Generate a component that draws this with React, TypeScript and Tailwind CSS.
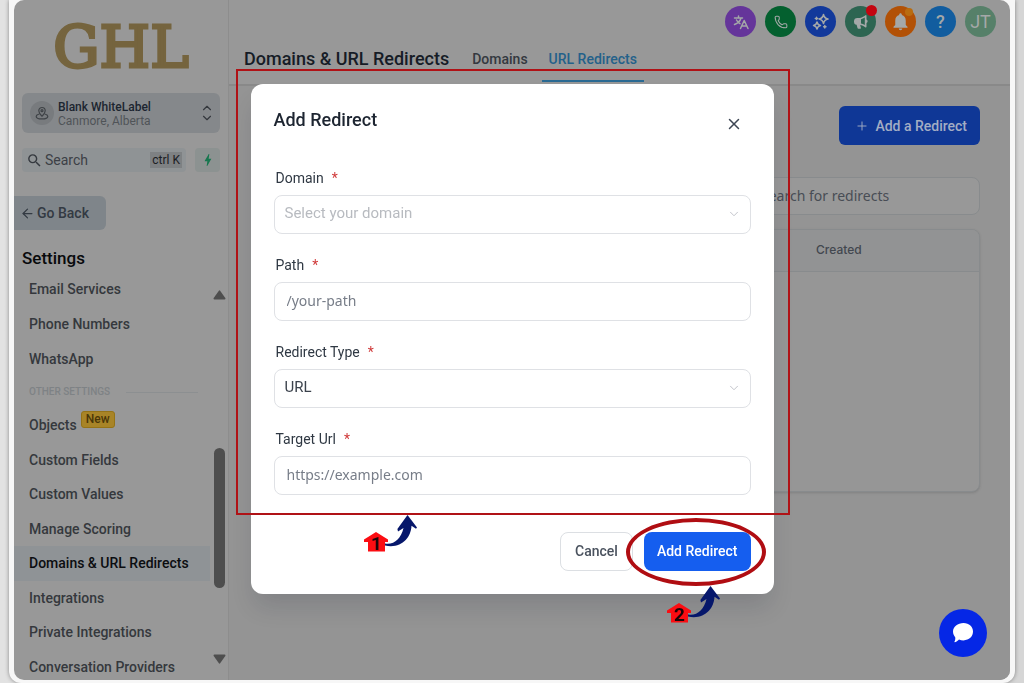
import { useId, type ReactNode } from "react";
import { ArrowLeft, ChevronDown, ChevronUp, Phone, Plus, X } from "lucide-react";
import { MdBolt, MdNotifications, MdSearch } from "react-icons/md";

const topLinks = ["Email Services", "Phone Numbers", "WhatsApp"];

const otherLinks = [
  "Objects",
  "Custom Fields",
  "Custom Values",
  "Manage Scoring",
  "Domains & URL Redirects",
  "Integrations",
  "Private Integrations",
  "Conversation Providers",
];

function NavItem({ label }: { label: string }) {
  const active = label === "Domains & URL Redirects";
  return (
    <li className="flex">
      <a
        href="#"
        aria-current={active ? "page" : undefined}
        className={
          active
            ? "flex flex-1 items-center bg-[#8f9396] pl-[15px] text-[#0b0d10]"
            : "flex flex-1 items-center pl-[15px] text-[#35383d]"
        }
      >
        {label}
        {label === "Objects" && (
          <span className="mb-3 ml-1 rounded-[3px] border border-[#957316] bg-[#a88427] px-1 text-xs leading-[15px] text-[#4a3608]">
            New
          </span>
        )}
      </a>
    </li>
  );
}

function LocationIcon() {
  return (
    <svg
      width="14"
      height="14"
      viewBox="0 0 14 14"
      fill="none"
      stroke="currentColor"
      strokeWidth="1.2"
      strokeLinecap="round"
      strokeLinejoin="round"
    >
      <path d="M7 10.200C5 8.300 3.800 6.700 3.800 4.700a3.200 3.200 0 0 1 6.400 0c0 2-1.200 3.600-3.200 5.500z" />
      <circle cx="7" cy="4.700" r="1" />
      <path d="M3.600 8.300C2 8.800 1.200 9.500 1.200 10.400 1.200 11.900 3.800 12.900 7 12.900s5.800-1 5.800-2.500c0-.9-.8-1.600-2.400-2.100" />
    </svg>
  );
}

function Sidebar() {
  return (
    <aside className="flex w-[215px] shrink-0 flex-col overflow-hidden border-r border-[#8d8d8d]">
      <div className="flex h-[93px] items-center justify-center font-['DejaVu_Serif',serif] text-[58px] leading-none text-[#75643e] [-webkit-text-stroke:3px_#75643e]">
        GHL
      </div>
      <button className="mx-2 flex h-10 shrink-0 items-center rounded-md bg-[#85888b] px-2 text-left">
        <span className="flex size-6 items-center justify-center rounded-full bg-[#787b7e] text-[#3f4347]">
          <LocationIcon />
        </span>
        <span className="ml-1 flex-1 pt-0.5 text-xs leading-[14px]">
          <span className="block font-medium text-[#1c2530]">Blank WhiteLabel</span>
          <span className="block text-[#505458]">Canmore, Alberta</span>
        </span>
        <span className="-mr-0.5 flex flex-col text-[#34383d]">
          <ChevronUp size={14} className="-mb-1" />
          <ChevronDown size={14} />
        </span>
      </button>
      <div className="mx-2 mt-[15px] flex h-6 shrink-0 gap-[9px]">
        <label className="flex min-w-0 flex-1 items-center rounded bg-[#8f9395] px-1 text-[#35393f]">
          <MdSearch size={17} className="shrink-0" />
          <input
            aria-label="Search"
            placeholder="Search"
            className="ml-0.5 w-0 flex-1 bg-transparent text-sm outline-none placeholder:text-[#3c4046] placeholder:opacity-100"
          />
          <kbd className="bg-[#7e8183] px-0.5 font-[Roboto,sans-serif] text-xs leading-4 text-[#1c2024]">
            ctrl K
          </kbd>
        </label>
        <button
          aria-label="Quick actions"
          className="flex w-[25px] items-center justify-center rounded bg-[#8c9291] text-[#17774f]"
        >
          <MdBolt size={16} />
        </button>
      </div>
      <button className="mt-6 flex h-[34px] w-[92px] shrink-0 items-center gap-0.5 rounded-r-md bg-[#7f858a] pl-1.5 text-sm font-medium text-[#333a43]">
        <ArrowLeft size={15} />
        Go Back
      </button>
      <h2 className="mt-4 pl-2 text-[17px] font-medium leading-6 text-[#080a0c]">
        Settings
      </h2>
      <div className="flex flex-1">
        <nav aria-label="Settings" className="flex flex-1 flex-col pt-0.5 text-sm font-medium">
          <ul className="grid h-[104px] auto-rows-fr">
            {topLinks.map((l) => (
              <NavItem key={l} label={l} />
            ))}
          </ul>
          <div className="flex h-8 items-center gap-4 pl-[15px] pr-3 text-[10px] text-[#7e8285]">
            OTHER SETTINGS
            <span className="h-px flex-1 bg-[#8c8f91]" />
          </div>
          <ul className="-mb-1 grid flex-1 auto-rows-fr">
            {otherLinks.map((l) => (
              <NavItem key={l} label={l} />
            ))}
          </ul>
        </nav>
        <div aria-hidden="true" className="mb-4 mt-4 flex w-[18px] flex-col items-center pt-1 text-[#4e4e4e]">
          <svg width="13" height="10" viewBox="0 0 13 10" fill="currentColor">
            <path d="M5.700.9a1 1 0 0 1 1.600 0l5 7.200c.4.7 0 1.400-.8 1.400h-10c-.8 0-1.200-.7-.8-1.400z" />
          </svg>
          <span className="flex-[147]" />
          <span className="w-[11px] flex-[139] rounded-full bg-current" />
          <span className="flex-[66]" />
          <svg width="13" height="10" viewBox="0 0 13 10" fill="currentColor">
            <path d="M5.700 9.100a1 1 0 0 0 1.600 0l5-7.200C12.700 1.200 12.300.5 11.500.5h-10C.7.5.3 1.200.7 1.900z" />
          </svg>
        </div>
      </div>
    </aside>
  );
}

function TranslateIcon() {
  return (
    <svg
      width="18"
      height="18"
      viewBox="0 0 18 18"
      fill="none"
      stroke="currentColor"
      strokeWidth="1.500"
      strokeLinecap="round"
      strokeLinejoin="round"
    >
      <path d="M2.500 5h8M6.500 3v2M9 5c-.8 3-3 5.200-6.500 6.500M4.500 7c.8 1.600 2 2.800 3.500 3.600" />
      <path d="M8.500 15.500l3.700-8 3.800 8M9.800 13h5" />
    </svg>
  );
}

function SparklesIcon() {
  return (
    <svg
      width="20"
      height="20"
      viewBox="0 0 20 20"
      fill="none"
      stroke="currentColor"
      strokeWidth="1.500"
      strokeLinejoin="round"
      strokeLinecap="round"
    >
      <path d="M12.500 2.500c.6 3 1.500 3.900 4.500 4.500-3 .6-3.900 1.500-4.500 4.500C11.900 8.500 11 7.600 8 7c3-.6 3.900-1.500 4.500-4.500z" />
      <path d="M6 10c.5 2.300 1.200 3 3.500 3.500C7.200 14 6.500 14.700 6 17c-.5-2.300-1.200-3-3.500-3.500C4.800 13 5.500 12.300 6 10z" />
      <path d="M5.500 5.200v2.400M4.300 6.400h2.400M13.800 13.500v2.400M12.600 14.700h2.400" />
    </svg>
  );
}

function MegaphoneIcon() {
  return (
    <svg width="18" height="18" viewBox="0 0 18 18" fill="currentColor">
      <path
        fillRule="evenodd"
        d="M13.500 2.200c.5-.3 1 0 1 .6v3.700a2 2 0 0 1 0 3.600v3.700c0 .6-.5.900-1 .6-1.900-1.400-3.500-2.200-5.300-2.500l.7 2.900c.1.600-.2 1-.8 1H6.400c-.5 0-.8-.2-.9-.7l-.9-3.300C2.900 11.700 2 10.500 2 8.400 2 6 3.200 4.900 5.500 4.900h2c2.300-.2 4-1.100 6-2.700zm-.7 2.400C11.400 5.500 10.200 6 9 6.300v4.200c1.300.2 2.500.7 3.800 1.400z"
      />
    </svg>
  );
}

function Header() {
  const circle =
    "relative flex size-[31px] items-center justify-center rounded-full text-[#a4a8a8]";
  return (
    <header className="flex h-[86px] flex-col border-b-2 border-[#898989]">
      <div className="mr-3.5 mt-1.5 flex gap-[9px] self-end">
        <button aria-label="Language" className={`${circle} bg-[#65359a]`}>
          <TranslateIcon />
        </button>
        <button aria-label="Phone" className={`${circle} bg-[#04602f]`}>
          <Phone size={14} strokeWidth={1.800} />
        </button>
        <button aria-label="Assistant" className={`${circle} bg-[#12399b]`}>
          <SparklesIcon />
        </button>
        <button aria-label="Announcements" className={`${circle} bg-[#2d6551]`}>
          <MegaphoneIcon />
          <span className="absolute -right-px -top-px size-[11px] rounded-full bg-[#c40510]" />
        </button>
        <button aria-label="Notifications" className={`${circle} bg-[#b25106]`}>
          <MdNotifications size={21} />
          <span className="absolute right-[3px] top-0.5 size-2 rounded-full bg-[#b96c10]" />
        </button>
        <button aria-label="Help" className={`${circle} bg-[#125d9f] text-lg font-medium`}>
          ?
        </button>
        <button className={`${circle} bg-[#568069] text-lg`}>JT</button>
      </div>
      <div className="flex flex-1 items-stretch pl-[15px]">
        <h1 className="mr-4 pt-2.5 text-lg font-medium leading-6 text-[#161c26]">
          Domains &amp; URL Redirects
        </h1>
        <nav aria-label="Sections" className="flex items-stretch gap-[7px] text-sm font-medium">
          <a href="#" className="px-[7px] pt-3 leading-5 text-[#34393f]">
            Domains
          </a>
          <a
            href="#"
            aria-current="page"
            className="mb-0.5 border-b-2 border-[#2a6a93] px-[7px] pt-3 leading-5 text-[#24618a]"
          >
            URL Redirects
          </a>
        </nav>
      </div>
    </header>
  );
}

function RedirectsPage() {
  return (
    <main className="flex flex-1 flex-col bg-[#949494] px-[30px] pt-5">
      <button className="flex h-[39px] items-center gap-1.5 self-end rounded-md bg-[#0f3796] pl-4 pr-[13px] text-sm font-medium text-[#a3adc4]">
        <Plus size={14} strokeWidth={1.600} />
        Add a Redirect
      </button>
      <input
        type="search"
        aria-label="Search for redirects"
        placeholder="Search for redirects"
        className="mt-8 h-[38px] w-[250px] self-end rounded-lg border border-[#888b8d] bg-[#989898] pb-0.5 pl-[30px] font-['Noto_Sans',sans-serif] text-sm outline-none placeholder:text-[#484d55] placeholder:opacity-100"
      />
      <div className="mt-3.5 h-[263px] overflow-hidden rounded-lg border border-[#888b8d] bg-[#969696] shadow-sm">
        <table className="w-full">
          <thead>
            <tr className="h-[41px] border-b border-[#888b8d] bg-[#929394]">
              <td />
              <th
                scope="col"
                className="w-[163px] text-left font-[Inter,sans-serif] text-xs font-medium text-[#42474f]"
              >
                Created
              </th>
            </tr>
          </thead>
        </table>
      </div>
    </main>
  );
}

function Field({ label, children }: { label: string; children: (id: string) => ReactNode }) {
  const id = useId();
  return (
    <div className="flex flex-col gap-[7px]">
      <label htmlFor={id} className="pl-0.5 text-sm leading-5 text-[#2f3843]">
        {label}
        <span className="ml-2 text-[#d03a3a]">*</span>
      </label>
      {children(id)}
    </div>
  );
}

function SelectBox({ id, value, muted }: { id: string; value: string; muted?: boolean }) {
  return (
    <div className="relative">
      <select
        id={id}
        className={
          muted
            ? "h-[39px] w-full appearance-none rounded-lg border border-[#dfe1e5] bg-white px-2.5 pb-0.5 text-[15px] text-[#b8bbc0] outline-none"
            : "h-[39px] w-full appearance-none rounded-lg border border-[#dfe1e5] bg-white px-2.5 pb-0.5 text-[15px] text-[#3b424c] outline-none"
        }
      >
        <option>{value}</option>
      </select>
      <ChevronDown
        size={14}
        strokeWidth={1.500}
        className="pointer-events-none absolute right-2.5 top-3 text-[#b9bcc2]"
      />
    </div>
  );
}

function PathInput({ id, placeholder }: { id: string; placeholder: string }) {
  return (
    <input
      id={id}
      placeholder={placeholder}
      className="h-[39px] w-full rounded-lg border border-[#dfe1e5] bg-white px-3 pb-0.5 font-['Noto_Sans',sans-serif] text-sm outline-none placeholder:text-[#777d88] placeholder:opacity-100"
    />
  );
}

function Callout({ step }: { step: number }) {
  return (
    <svg width="54" height="42" viewBox="0 0 54 42">
      <path d="M12 17 24 24.500V27h-3v9.500H4V27H0v-2.500z" fill="#fb0d12" />
      <text
        x="12.500"
        y="35"
        textAnchor="middle"
        fill="#1b0508"
        className="font-[Roboto,sans-serif] text-[19px] font-bold"
      >
        {step}
      </text>
      <path
        d="M21 28.500c9 1.500 16-4.500 18.500-15.500l-5.500 3.500-.6-2.500L43.500 0 53 12.500l-1 1.200-4.500-3C47 23 37 34 21 30.500z"
        fill="#06176b"
      />
    </svg>
  );
}

function AddRedirectDialog() {
  return (
    <div className="fixed inset-x-0 top-[84px] flex justify-center">
      <section
        role="dialog"
        aria-labelledby="dialog-title"
        className="relative w-[523px] rounded-xl bg-white p-[23px] shadow-[0_16px_24px_-4px_rgba(16,24,40,0.14)]"
      >
        <div className="flex items-start justify-between">
          <h2 id="dialog-title" className="text-lg font-medium leading-[26px] text-[#1d2531]">
            Add Redirect
          </h2>
          <button aria-label="Close" className="mr-2 mt-2 text-[#3d4654]">
            <X size={18} />
          </button>
        </div>
        <form className="mt-[35px] flex flex-col gap-[21px]">
          <Field label="Domain">
            {(id) => <SelectBox id={id} value="Select your domain" muted />}
          </Field>
          <Field label="Path">{(id) => <PathInput id={id} placeholder="/your-path" />}</Field>
          <Field label="Redirect Type">{(id) => <SelectBox id={id} value="URL" />}</Field>
          <Field label="Target Url">
            {(id) => <PathInput id={id} placeholder="https://example.com" />}
          </Field>
        </form>
        <div className="mt-[37px] flex justify-end gap-[11px] text-sm font-medium">
          <button className="h-[39px] rounded-lg border border-[#dcdfe3] px-3.5 pb-0.5 text-[#4a525e]">
            Cancel
          </button>
          <button className="h-[39px] rounded-lg bg-[#155eef] px-[13px] pb-0.5 text-white">
            Add Redirect
          </button>
        </div>

        <div className="pointer-events-none absolute -left-[15px] -right-4 -top-[15px] h-[446px] border-2 border-[#b01216]" />
        <div className="pointer-events-none absolute bottom-2 right-2 h-[68px] w-[140px] rounded-[50%] border-4 border-[#b00d12]" />
        <div className="pointer-events-none absolute left-[113px] top-[431px]">
          <Callout step={1} />
        </div>
        <div className="pointer-events-none absolute left-[416px] top-[502px]">
          <Callout step={2} />
        </div>
      </section>
    </div>
  );
}

function ChatBubble() {
  return (
    <button
      aria-label="Open chat"
      className="fixed bottom-[26px] right-[37px] flex size-12 items-center justify-center rounded-full bg-[#0527e6]"
    >
      <svg width="22" height="20" viewBox="0 0 22 20" fill="#fff">
        <path d="M11.500 0C17.200 0 21 3.700 21 8.600s-3.800 8.800-9.500 8.800c-1.700 0-3.200-.3-4.500-.9-.9 1-2.300 2.200-4 2.800-.5.2-.7-.3-.5-.7.6-1.100.9-2.600.8-4.200C2 12.900 1 10.900 1 8.600 1 3.700 5.800 0 11.500 0z" />
      </svg>
    </button>
  );
}

export default function App() {
  return (
    <div className="flex min-h-screen overflow-hidden bg-[linear-gradient(90deg,#e2e2e2,#d6d6d6)] px-[9px] font-[Roboto,sans-serif]">
      <div className="flex flex-1 rounded-b-xl bg-[#f7f7f7] px-[5px] pb-[3px] shadow-[0_0_4px_rgba(0,0,0,0.4)]">
        <div className="flex flex-1 overflow-hidden rounded-[10px] bg-[#989898]">
          <Sidebar />
          <div className="flex min-w-0 flex-1 flex-col">
            <Header />
            <RedirectsPage />
          </div>
        </div>
      </div>
      <AddRedirectDialog />
      <ChatBubble />
    </div>
  );
}
